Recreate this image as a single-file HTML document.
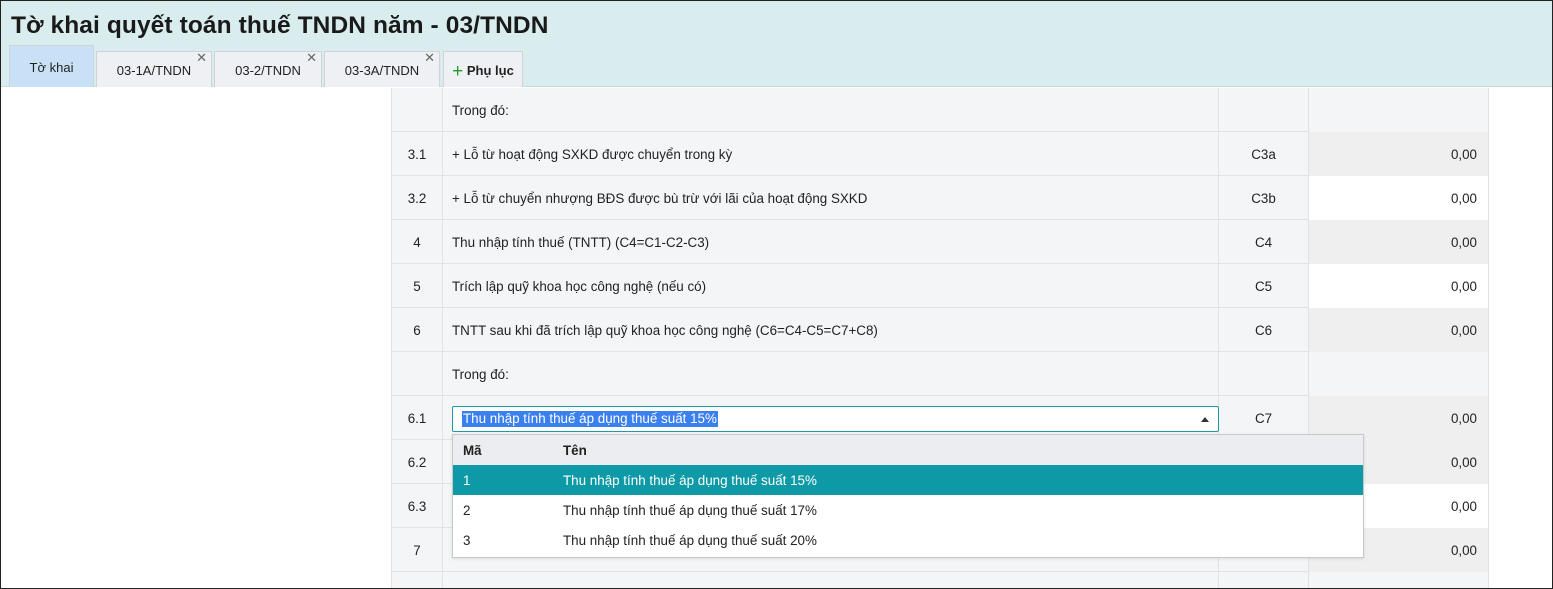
<!DOCTYPE html>
<html style="width:1553px;height:589px;overflow:hidden"><head><meta charset="utf-8"><style>
*{box-sizing:border-box;margin:0;padding:0}
body{width:1553px;height:589px;overflow:hidden;font-family:"Liberation Sans","DejaVu Sans",sans-serif;background:#fff;position:relative}
.frame{position:absolute;left:0;top:0;width:1553px;height:589px;border:1px solid #222;z-index:50;pointer-events:none}
.hdr{position:absolute;left:0;top:0;width:1553px;height:87px;background:#d9edef;border-bottom:1px solid #c6dadc}
h1{position:absolute;left:11px;top:12px;font-size:24.5px;font-weight:bold;color:#1a1a1a;letter-spacing:0.1px}
.tab{position:absolute;top:51px;height:36px;background:#eef0f3;border:1px solid #d0d4d8;border-bottom:none;font-size:13px;color:#222;text-align:center;line-height:38px}
.tab .x{position:absolute;right:4px;top:-13px;font-size:13px;color:#666;font-weight:bold}
.t0{left:9px;top:45px;height:42px;width:85px;background:#c9e1f6;line-height:44px}
.wrap{position:absolute;left:0;top:0;width:1553px;height:589px;overflow:hidden}
.row{position:absolute;left:391px;width:1098px;height:44px;border-bottom:1px solid #e0e2e5;background:#f4f5f7;font-size:13.4px;color:#222}
.row div{position:absolute;top:0;height:44px;line-height:46px;border-right:1px solid #e0e2e5}
.c1{left:0;width:52px;text-align:center;border-left:1px solid #e0e2e5}
.c2{left:52px;width:776px;padding-left:9px}
.c3{left:828px;width:90px;text-align:center}
.c4{left:918px;width:180px;text-align:right;padding-right:11px;background:#efefef}
.c4.w{background:#fff}
.c4.n{background:#f4f5f7}
.inp{position:absolute;left:452px;top:406px;width:767px;height:26px;border:1px solid #1c9aa5;background:#fff;border-radius:2px}
.inp span{position:absolute;left:9px;top:4px;background:#3b80f0;color:#fff;font-size:13.4px;line-height:16px;padding:0 1px}
.arr{position:absolute;right:9px;top:10px;width:0;height:0;border-left:4px solid transparent;border-right:4px solid transparent;border-bottom:5px solid #333}
.dd{position:absolute;left:452px;top:434px;width:912px;height:124px;border:1px solid #c6c8cb;background:#fff;font-size:13.4px;color:#222;box-shadow:0 1px 3px rgba(0,0,0,.1)}
.dd div{position:absolute;left:0;width:910px;height:30px;line-height:31px}
.dd b,.dd i{position:absolute;font-style:normal;font-weight:normal}
.dd b{left:10px}.dd i{left:110px}
</style></head><body><div class="wrap">
<div class="hdr"></div>
<h1>Tờ khai quyết toán thuế TNDN năm - 03/TNDN</h1>
<div class="tab t0">Tờ khai</div>
<div class="tab" style="left:96px;width:116px">03-1A/TNDN<span class="x">✕</span></div>
<div class="tab" style="left:214px;width:108px">03-2/TNDN<span class="x">✕</span></div>
<div class="tab" style="left:324px;width:116px">03-3A/TNDN<span class="x">✕</span></div>
<div class="tab" style="left:443px;width:80px;font-weight:bold"><span style="color:#2a9a2a;font-size:19px;font-weight:normal;vertical-align:-2px">+</span> Phụ lục</div>

<div class="row" style="top:88px"><div class="c1"></div><div class="c2">Trong đó:</div><div class="c3"></div><div class="c4 n"></div></div>
<div class="row" style="top:132px"><div class="c1">3.1</div><div class="c2">+ Lỗ từ hoạt động SXKD được chuyển trong kỳ</div><div class="c3">C3a</div><div class="c4">0,00</div></div>
<div class="row" style="top:176px"><div class="c1">3.2</div><div class="c2">+ Lỗ từ chuyển nhượng BĐS được bù trừ với lãi của hoạt động SXKD</div><div class="c3">C3b</div><div class="c4 w">0,00</div></div>
<div class="row" style="top:220px"><div class="c1">4</div><div class="c2">Thu nhập tính thuế (TNTT) (C4=C1-C2-C3)</div><div class="c3">C4</div><div class="c4">0,00</div></div>
<div class="row" style="top:264px"><div class="c1">5</div><div class="c2">Trích lập quỹ khoa học công nghệ (nếu có)</div><div class="c3">C5</div><div class="c4 w">0,00</div></div>
<div class="row" style="top:308px"><div class="c1">6</div><div class="c2">TNTT sau khi đã trích lập quỹ khoa học công nghệ (C6=C4-C5=C7+C8)</div><div class="c3">C6</div><div class="c4">0,00</div></div>
<div class="row" style="top:352px"><div class="c1"></div><div class="c2">Trong đó:</div><div class="c3"></div><div class="c4 n"></div></div>
<div class="row" style="top:396px"><div class="c1">6.1</div><div class="c2"></div><div class="c3">C7</div><div class="c4">0,00</div></div>
<div class="row" style="top:440px"><div class="c1">6.2</div><div class="c2"></div><div class="c3"></div><div class="c4">0,00</div></div>
<div class="row" style="top:484px"><div class="c1">6.3</div><div class="c2"></div><div class="c3"></div><div class="c4 w">0,00</div></div>
<div class="row" style="top:528px"><div class="c1">7</div><div class="c2"></div><div class="c3"></div><div class="c4">0,00</div></div>
<div class="row" style="top:572px;height:17px"><div class="c1"></div><div class="c2"></div><div class="c3"></div><div class="c4 n"></div></div>

<div class="inp"><span>Thu nhập tính thuế áp dụng thuế suất 15%</span><i class="arr"></i></div>
<div class="dd">
<div style="top:0;background:#ecedf0"><b style="font-weight:bold">Mã</b><i style="font-weight:bold">Tên</i></div>
<div style="top:30px;background:#0e99a6;color:#fff"><b>1</b><i>Thu nhập tính thuế áp dụng thuế suất 15%</i></div>
<div style="top:60px"><b>2</b><i>Thu nhập tính thuế áp dụng thuế suất 17%</i></div>
<div style="top:90px"><b>3</b><i>Thu nhập tính thuế áp dụng thuế suất 20%</i></div>
</div>
<div class="frame"></div>
</div></body></html>
